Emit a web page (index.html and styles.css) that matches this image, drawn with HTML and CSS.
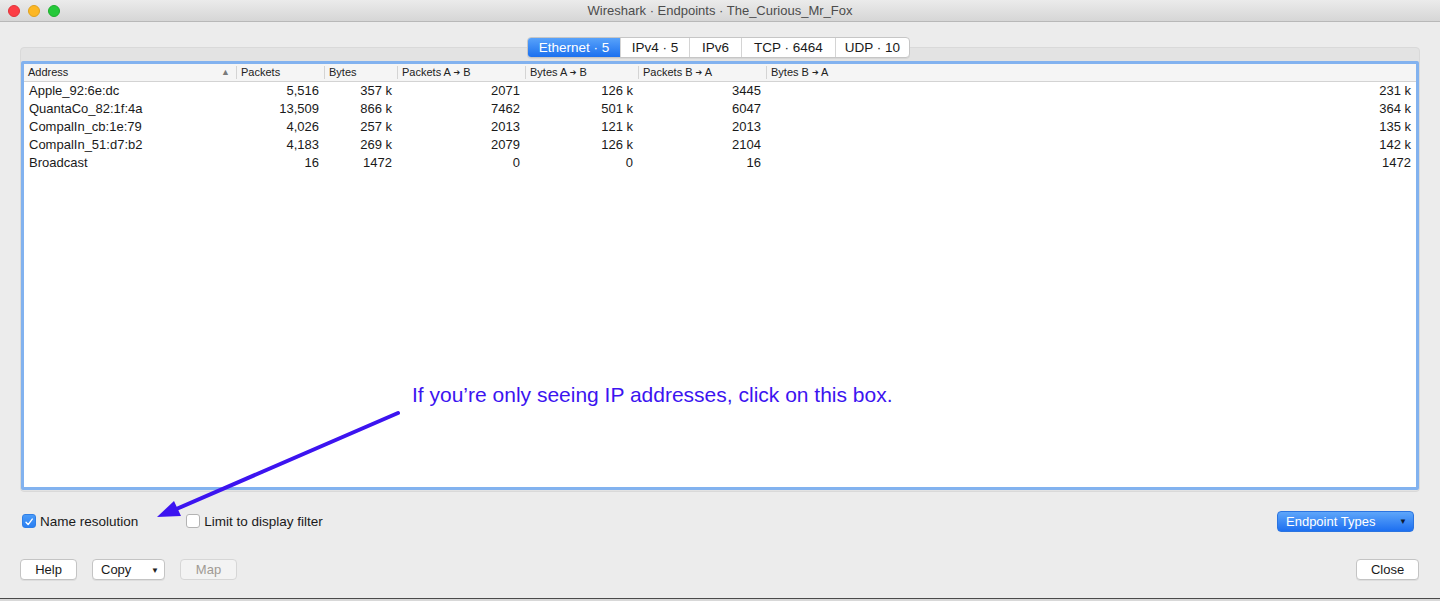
FILE: index.html
```html
<!DOCTYPE html>
<html>
<head>
<meta charset="utf-8">
<title>Wireshark · Endpoints</title>
<link rel="stylesheet" href="styles.css">
</head>
<body>
<div class="window">
  <div class="titlebar">
    <div class="lights">
      <span class="light red"></span>
      <span class="light yellow"></span>
      <span class="light green"></span>
    </div>
    <div class="title">Wireshark · Endpoints · The_Curious_Mr_Fox</div>
  </div>

  <div class="content">
    <div class="tabs">
      <div class="seg">
        <span class="tab active t-eth">Ethernet · 5</span>
        <span class="tab t-ip4">IPv4 · 5</span>
        <span class="tab t-ip6">IPv6</span>
        <span class="tab t-tcp">TCP · 6464</span>
        <span class="tab t-udp">UDP · 10</span>
      </div>
    </div>

    <div class="pane">
      <div class="table">
        <div class="row head">
          <div class="hc addr">Address<span class="sort">▲</span></div>
          <div class="hc">Packets</div>
          <div class="hc">Bytes</div>
          <div class="hc">Packets A <span class="ar">➔</span> B</div>
          <div class="hc">Bytes A <span class="ar">➔</span> B</div>
          <div class="hc">Packets B <span class="ar">➔</span> A</div>
          <div class="hc">Bytes B <span class="ar">➔</span> A</div>
        </div>
        <div class="row">
          <div class="c name">Apple_92:6e:dc</div><div class="c">5,516</div><div class="c">357 k</div><div class="c">2071</div><div class="c">126 k</div><div class="c">3445</div><div class="c">231 k</div>
        </div>
        <div class="row">
          <div class="c name">QuantaCo_82:1f:4a</div><div class="c">13,509</div><div class="c">866 k</div><div class="c">7462</div><div class="c">501 k</div><div class="c">6047</div><div class="c">364 k</div>
        </div>
        <div class="row">
          <div class="c name">CompalIn_cb:1e:79</div><div class="c">4,026</div><div class="c">257 k</div><div class="c">2013</div><div class="c">121 k</div><div class="c">2013</div><div class="c">135 k</div>
        </div>
        <div class="row">
          <div class="c name">CompalIn_51:d7:b2</div><div class="c">4,183</div><div class="c">269 k</div><div class="c">2079</div><div class="c">126 k</div><div class="c">2104</div><div class="c">142 k</div>
        </div>
        <div class="row">
          <div class="c name">Broadcast</div><div class="c">16</div><div class="c">1472</div><div class="c">0</div><div class="c">0</div><div class="c">16</div><div class="c">1472</div>
        </div>
      </div>
    </div>

    <div class="options">
      <label class="check"><span class="box checked"><svg viewBox="0 0 14 14" width="14" height="14"><path d="M3.5 7.2 L6 10 L10.8 3.6" fill="none" stroke="#fff" stroke-width="1.6" stroke-linecap="round" stroke-linejoin="round"/></svg></span>Name resolution</label>
      <label class="check limit"><span class="box"></span>Limit to display filter</label>
      <div class="spacer"></div>
      <div class="ep-btn">Endpoint Types<span class="caret">▼</span></div>
    </div>

    <div class="buttons">
      <div class="btn help">Help</div>
      <div class="btn copy">Copy<span class="caret dark">▼</span></div>
      <div class="btn map disabled">Map</div>
      <div class="spacer"></div>
      <div class="btn close">Close</div>
    </div>
  </div>

  <div class="note">If you’re only seeing IP addresses, click on this box.</div>
  <svg class="arrow" width="1440" height="601" viewBox="0 0 1440 601">
    <line x1="398" y1="413" x2="174" y2="510" stroke="#3c14f0" stroke-width="4" stroke-linecap="round"/>
    <polygon points="157,517 174,501 181,516" fill="#3c14f0"/>
  </svg>
</div>
</body>
</html>
```

FILE: styles.css
```css
html, body {
  margin: 0;
  padding: 0;
  background: #d8d8d8;
}
body {
  font-family: "Liberation Sans", Arial, sans-serif;
  font-size: 13px;
  color: #1a1a1a;
}
.window {
  position: relative;
  width: 1440px;
  height: 598px;
  background: #ececec;
  border-bottom: 1px solid #4a4a4a;
  overflow: hidden;
  display: flex;
  flex-direction: column;
}
.titlebar {
  height: 22px;
  flex: 0 0 22px;
  box-sizing: border-box;
  background: linear-gradient(#ebebeb, #d6d6d6);
  border-bottom: 1px solid #b8b8b8;
  display: flex;
  align-items: center;
  position: relative;
}
.lights {
  display: flex;
  gap: 8px;
  padding-left: 8px;
}
.light {
  width: 12px;
  height: 12px;
  border-radius: 50%;
  box-sizing: border-box;
}
.red { background: #fc3d45; border: 1px solid #e0333a; }
.yellow { background: #fdb723; border: 1px solid #dfa11d; }
.green { background: #25c93a; border: 1px solid #1dae2d; }
.title {
  position: absolute;
  left: 0;
  right: 0;
  top: 0;
  line-height: 22px;
  text-align: center;
  color: #4c4c4c;
  font-size: 13px;
}
.content {
  flex: 1;
  display: flex;
  flex-direction: column;
  padding: 0 20px;
}
.tabs {
  display: flex;
  justify-content: center;
  margin-top: 15px;
  position: relative;
  z-index: 1;
  padding-right: 3px;
}
.seg {
  display: flex;
  height: 21px;
  box-sizing: border-box;
  border: 1px solid #c6c6c6;
  border-radius: 4px;
  background: #fff;
  overflow: hidden;
  box-shadow: 0 1px 0 rgba(0,0,0,0.05);
}
.tab {
  display: flex;
  align-items: center;
  justify-content: center;
  font-size: 13.5px;
  color: #1a1a1a;
  border-left: 1px solid #d4d4d4;
  box-sizing: border-box;
}
.tab:first-child { border-left: none; }
.tab.active {
  background: linear-gradient(#58a2fa, #1b70ef);
  color: #fff;
}
.t-eth { width: 92px; }
.t-ip4 { width: 69px; }
.t-ip6 { width: 52px; }
.t-tcp { width: 94px; }
.t-udp { width: 74px; }
.pane {
  margin-top: -11px;
  background: #e3e3e3;
  border: 1px solid #d9d9d9;
  border-radius: 4px;
  padding: 13px 0 1px 0;
}
.table {
  height: 423px;
  background: #fff;
  border: 3px solid #82b2ef;
  border-radius: 2px;
}
.row {
  display: grid;
  grid-template-columns: 212px 88px 73px 128px 113px 128px 1fr;
  height: 18px;
  align-items: center;
}
.row.head {
  height: 18px;
  background: #f5f5f5;
  border-bottom: 1px solid #d3d3d3;
  box-sizing: border-box;
}
.hc {
  font-size: 11px;
  color: #222;
  padding-left: 4px;
  height: 13px;
  line-height: 13px;
  border-left: 1px solid #d4d4d4;
  position: relative;
  white-space: nowrap;
}
.ar {
  font-family: "DejaVu Sans", sans-serif;
  font-size: 8px;
  vertical-align: 1px;
}
.hc.addr { border-left: none; }
.sort {
  position: absolute;
  right: 6px;
  top: 0;
  font-size: 9px;
  color: #7a7a7a;
}
.c {
  text-align: right;
  padding-right: 5px;
  font-size: 13px;
  line-height: 18px;
  white-space: nowrap;
}
.c.name {
  text-align: left;
  padding-left: 5px;
  padding-right: 0;
}
.options {
  display: flex;
  align-items: center;
  height: 22px;
  margin-top: 18px;
}
.check {
  display: flex;
  align-items: center;
  gap: 4px;
  font-size: 13.5px;
  color: #1a1a1a;
  margin-left: 2px;
}
.check.limit { margin-left: 48px; }
.box {
  width: 14px;
  height: 14px;
  box-sizing: border-box;
  border: 1px solid #b3b3b3;
  border-radius: 3px;
  background: #fff;
  display: inline-flex;
}
.box.checked {
  background: linear-gradient(#4a9bf8, #2a7ff2);
  border-color: #2f7fe6;
}
.spacer { flex: 1; }
.ep-btn {
  width: 137px;
  height: 21px;
  box-sizing: border-box;
  margin-right: 6px;
  border-radius: 4px;
  background: linear-gradient(#5ea6fa, #1d6ff0);
  border: 1px solid #2b74e0;
  color: #fff;
  font-size: 13px;
  display: flex;
  align-items: center;
  padding-left: 8px;
  position: relative;
}
.caret {
  position: absolute;
  right: 6px;
  top: 5px;
  font-size: 8px;
  color: #0e1a33;
}
.caret.dark { color: #222; right: 5px; top: 6px; }
.buttons {
  display: flex;
  align-items: center;
  height: 21px;
  margin-top: 27px;
}
.btn {
  height: 21px;
  box-sizing: border-box;
  background: #fff;
  border: 1px solid #c4c4c4;
  border-radius: 4px;
  box-shadow: 0 1px 0 rgba(0,0,0,0.06);
  font-size: 13px;
  color: #1a1a1a;
  display: flex;
  align-items: center;
  justify-content: center;
  position: relative;
}
.help { width: 57px; }
.copy { width: 73px; margin-left: 15px; justify-content: flex-start; padding-left: 8px; }
.map { width: 57px; margin-left: 15px; }
.btn.disabled {
  background: #f3f3f3;
  border-color: #d6d6d6;
  color: #a09a94;
  box-shadow: none;
}
.close { width: 63px; margin-right: 1px; }
.note {
  position: absolute;
  left: 412px;
  top: 383px;
  font-size: 21px;
  color: #3c14f0;
  white-space: nowrap;
}
.arrow {
  position: absolute;
  left: 0;
  top: 0;
  pointer-events: none;
}
```
